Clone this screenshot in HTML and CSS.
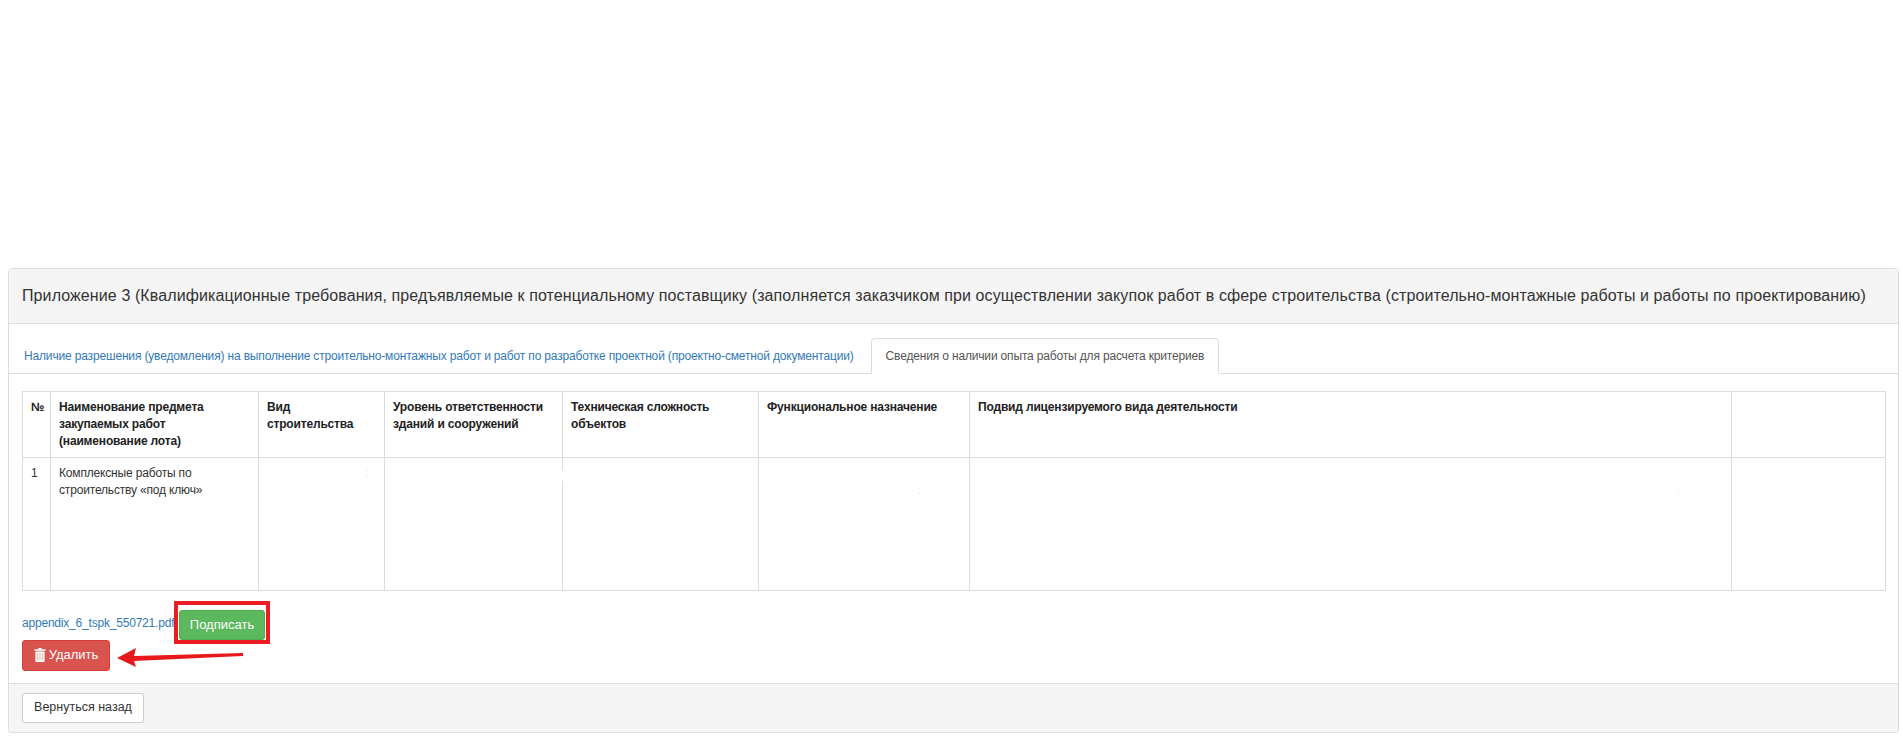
FILE: index.html
```html
<!DOCTYPE html>
<html lang="ru">
<head>
<meta charset="utf-8">
<title>Приложение 3</title>
<link rel="stylesheet" href="styles.css">
</head>
<body>
<div class="panel">
  <div class="panel-heading">Приложение 3 (Квалификационные требования, предъявляемые к потенциальному поставщику (заполняется заказчиком при осуществлении закупок работ в сфере строительства (строительно-монтажные работы и работы по проектированию)</div>
  <ul class="tabs">
    <li class="tab"><a href="#">Наличие разрешения (уведомления) на выполнение строительно-монтажных работ и работ по разработке проектной (проектно-сметной документации)</a></li>
    <li class="tab tab-active"><a href="#">Сведения о наличии опыта работы для расчета критериев</a></li>
  </ul>
  <div class="panel-body">
    <table class="grid">
      <colgroup>
        <col class="c1"><col class="c2"><col class="c3"><col class="c4"><col class="c5"><col class="c6"><col class="c7"><col class="c8">
      </colgroup>
      <thead>
        <tr>
          <th>№</th>
          <th>Наименование предмета закупаемых работ (наименование лота)</th>
          <th>Вид строительства</th>
          <th>Уровень ответственности зданий и сооружений</th>
          <th>Техническая сложность объектов</th>
          <th>Функциональное назначение</th>
          <th>Подвид лицензируемого вида деятельности</th>
          <th></th>
        </tr>
      </thead>
      <tbody>
        <tr>
          <td>1</td>
          <td>Комплексные работы по строительству «под ключ»</td>
          <td><span class="speck speck-a"></span><span class="speck speck-b"></span></td>
          <td></td>
          <td><span class="border-gap"></span></td>
          <td><span class="speck speck-c"></span></td>
          <td><span class="speck speck-d"></span></td>
          <td></td>
        </tr>
      </tbody>
    </table>
    <div class="file-row">
      <a class="file-link" href="#">appendix_6_tspk_550721.pdf</a>
      <span class="highlight"><button class="btn btn-green">Подписать</button></span>
    </div>
    <button class="btn btn-red">
      <svg class="trash" viewBox="0 0 12 14" width="12" height="14" aria-hidden="true"><path fill="#fff" d="M4.500 0h3l.5 1.200h3.500v1.600H.5V1.200H4zM1.400 3.600h9.200V13c0 .6-.4 1-1 1H2.400c-.6 0-1-.4-1-1z"/><path fill="#e9b49c" d="M3.200 5h1v7.600h-1zM5.500 5h1v7.600h-1zM7.800 5h1v7.600h-1z"/></svg>
      <span>Удалить</span>
    </button>
  </div>
  <div class="panel-footer">
    <button class="btn btn-default">Вернуться назад</button>
  </div>
  <svg class="arrow" viewBox="0 0 127 23" width="127" height="23" aria-hidden="true">
    <path fill="#e8191c" d="M0 13 19 3l-2 8 109-3v3L17 16l2 6z"/>
  </svg>
</div>
</body>
</html>
```

FILE: styles.css
```css
* { box-sizing: border-box; }
html, body { margin: 0; padding: 0; }
body {
  background: #fff;
  color: #333;
  font-family: "Liberation Sans", Arial, sans-serif;
  font-size: 12px;
  line-height: 17px;
  padding: 268px 4px 0 8px;
}
.panel {
  position: relative;
  height: 465px;
  display: flex;
  flex-direction: column;
  background: #fff;
  border: 1px solid #ddd;
  border-radius: 4px;
  box-shadow: 0 1px 1px rgba(0,0,0,.05);
}
.panel-heading {
  height: 55px;
  flex: none;
  padding: 18px 13px 0;
  background: #f5f5f5;
  border-bottom: 1px solid #ddd;
  font-size: 16px;
  line-height: 18px;
  letter-spacing: .1px;
  white-space: nowrap;
  border-radius: 3px 3px 0 0;
}
.tabs {
  list-style: none;
  margin: 0;
  padding: 13px 0 0;
  height: 50px;
  flex: none;
  display: flex;
  align-items: flex-end;
  border-bottom: 1px solid #ddd;
  letter-spacing: -.165px;
}
.tab { margin-bottom: -1px; margin-right: 2px; }
.tab a {
  display: block;
  height: 36px;
  padding: 9px 14px;
  border: 1px solid transparent;
  border-radius: 4px 4px 0 0;
  color: #337ab7;
  text-decoration: none;
  white-space: nowrap;
}
.tab-active a {
  color: #555;
  background: #fff;
  border-color: #ddd #ddd #fff;
}
.panel-body {
  flex: 1;
  padding: 17px 13px 0;
}
.grid {
  table-layout: fixed;
  border-collapse: collapse;
  width: 1863px;
  letter-spacing: -.17px;
}
.c1 { width: 28px; }
.c2 { width: 208px; }
.c3 { width: 126px; }
.c4 { width: 178px; }
.c5 { width: 196px; }
.c6 { width: 211px; }
.c7 { width: 762px; }
.c8 { width: 154px; }
.grid th, .grid td {
  border: 1px solid #ddd;
  padding: 7px 8px;
  text-align: left;
  vertical-align: top;
}
.grid th { color: #222; font-weight: 700; height: 65px; }
.grid td { position: relative; height: 133px; }
.speck {
  position: absolute;
  width: 1px;
  height: 1px;
  background: #dcdce8;
}
.speck-a { left: 107px; top: 12px; }
.speck-b { left: 107px; top: 18px; }
.speck-c { left: 160px; top: 35px; }
.speck-d { left: 708px; top: 35px; }
.border-gap {
  position: absolute;
  left: -1px;
  top: 12px;
  width: 2px;
  height: 11px;
  background: #fff;
}
.file-row {
  display: flex;
  align-items: flex-start;
  height: 30px;
  margin-top: 19px;
}
.file-link {
  flex: 0 0 157px;
  margin-top: 5px;
  color: #337ab7;
  letter-spacing: -.2px;
  text-decoration: none;
  white-space: nowrap;
}
.highlight {
  position: relative;
  display: block;
  height: 30px;
}
.highlight::after {
  content: "";
  position: absolute;
  left: -5px;
  right: -5px;
  top: -9px;
  bottom: -4px;
  border: 4px solid #ed1c24;
  pointer-events: none;
}
.btn {
  display: block;
  height: 30px;
  padding: 0 0 2px;
  border: 1px solid transparent;
  border-radius: 3px;
  font-family: inherit;
  line-height: 17px;
  white-space: nowrap;
}
.btn-green { width: 86px; font-size: 13px; color: #fff; background: #5cb85c; border-color: #4cae4c; }
.btn-red { display: flex; align-items: center; justify-content: center; gap: 3px; width: 88px; height: 31px; font-size: 13px; color: #fff; background: #d9534f; border-color: #d43f3a; }
.btn-default { width: 122px; font-size: 12.5px; color: #333; background: #fff; border-color: #ccc; }
.trash { flex: none; }
.panel-footer {
  height: 49px;
  flex: none;
  padding: 9px 13px;
  background: #f5f5f5;
  border-top: 1px solid #ddd;
  border-radius: 0 0 3px 3px;
}
.arrow {
  position: absolute;
  left: 108px;
  top: 376px;
}
```
